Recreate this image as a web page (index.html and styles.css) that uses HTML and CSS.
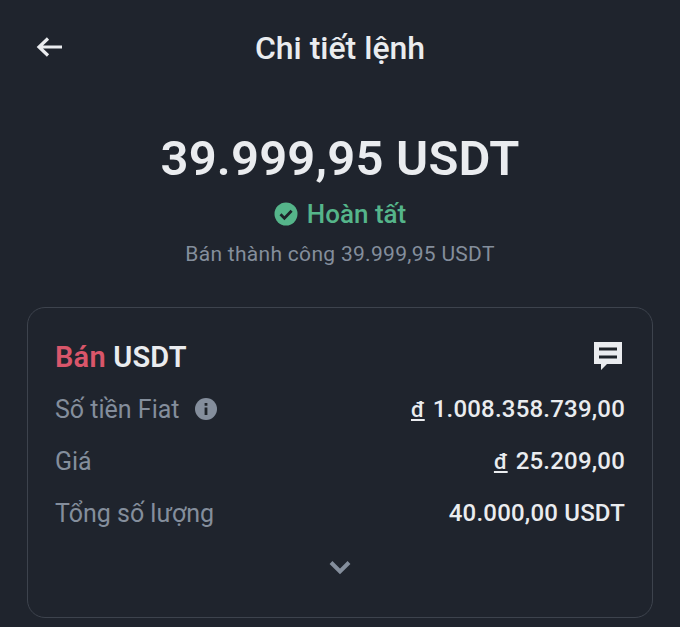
FILE: index.html
```html
<!DOCTYPE html>
<html>
<head>
<title>Chi tiết lệnh</title>
<meta charset="UTF-8">
<link rel="stylesheet" href="styles.css">
</head>
<body>
<div class="topbar">
  <svg class="back" width="28" height="24" viewBox="0 0 28 24"><path d="M27 12H4M13 3.5L4 12l9 8.5" fill="none" stroke="#eaecef" stroke-width="3.2"/></svg>
  <h1>Chi tiết lệnh</h1>
</div>
<div class="summary">
  <div class="amount">39.999,95 USDT</div>
  <div class="status">
    <svg width="24" height="24" viewBox="0 0 24 24"><circle cx="12" cy="12" r="11.5" fill="#55b58a"/><path d="M6.5 12.3l3.9 3.9 7.2-7.4" fill="none" stroke="#1e2329" stroke-width="2.8"/></svg>
    <span>Hoàn tất</span>
  </div>
  <div class="note">Bán thành công 39.999,95 USDT</div>
</div>
<div class="card">
  <div class="card-head">
    <div class="title"><span class="sell">Bán</span> USDT</div>
    <svg class="chat" width="28" height="30" viewBox="0 0 28 30"><path d="M0 1h28v22H13l-6 6v-6H0z" fill="#eaecef"/><path d="M5 8h18M5 16h18" stroke="#1e2329" stroke-width="3.2"/></svg>
  </div>
  <div class="row">
    <div class="label">Số tiền Fiat
      <svg width="22" height="22" viewBox="0 0 22 22"><circle cx="11" cy="11" r="11" fill="#848e9c"/><path d="M11 9.5v7.5M11 5v2.8" stroke="#1e2329" stroke-width="2.8"/></svg>
    </div>
    <div class="value"><span class="dong">đ</span>1.008.358.739,00</div>
  </div>
  <div class="row">
    <div class="label">Giá</div>
    <div class="value"><span class="dong">đ</span>25.209,00</div>
  </div>
  <div class="row">
    <div class="label">Tổng số lượng</div>
    <div class="value">40.000,00 USDT</div>
  </div>
  <div class="more">
    <svg width="24" height="16" viewBox="0 0 24 16"><path d="M3 3.5l9 9 9-9" fill="none" stroke="#848e9c" stroke-width="4"/></svg>
  </div>
</div>
</body>
</html>
```

FILE: styles.css
```css
body {
  margin: 0;
  height: 627px;
  overflow: hidden;
  background: #1f242d;
  color: #eaecef;
  font-family: "Roboto", "Liberation Sans", sans-serif;
}

.topbar {
  display: flex;
  align-items: center;
  justify-content: center;
  height: 96px;
  position: relative;
}

.back {
  position: absolute;
  left: 35px;
  top: 35px;
}

h1 {
  margin: 0;
  font-size: 32px;
  font-weight: 500;
}

.summary {
  display: flex;
  flex-direction: column;
  align-items: center;
  padding-top: 33px;
}

.amount {
  font-size: 49px;
  font-weight: 600;
  letter-spacing: 0.2px;
  line-height: 60px;
}

.status {
  display: flex;
  align-items: center;
  gap: 9px;
  margin-top: 10px;
  height: 30px;
  font-size: 26px;
  font-weight: 500;
  color: #55b58a;
}

.note {
  margin-top: 12px;
  font-size: 21px;
  line-height: 26px;
  letter-spacing: 0.3px;
  color: #848e9c;
}

.card {
  margin: 40px 27px 0;
  padding: 31px 27px 0;
  height: 311px;
  box-sizing: border-box;
  border: 1.5px solid #3d434d;
  border-radius: 18px;
}

.card-head {
  display: flex;
  justify-content: space-between;
  align-items: center;
  height: 36px;
}

.chat {
  margin-right: 3px;
  margin-bottom: 2px;
}

.title {
  font-size: 29px;
  font-weight: 600;
  letter-spacing: 0.2px;
}

.sell {
  color: #d9566a;
}

.row {
  display: flex;
  justify-content: space-between;
  align-items: center;
  height: 52px;
}

.row:nth-child(2) {
  margin-top: 8px;
}

.label {
  display: flex;
  align-items: center;
  gap: 15px;
  font-size: 25px;
  color: #848e9c;
}

.value {
  font-size: 24px;
  font-weight: 500;
  letter-spacing: 0.2px;
}

.dong {
  margin-right: 8px;
  font-size: 22px;
  text-decoration: underline;
}

.more {
  display: flex;
  justify-content: center;
  margin-top: 20px;
}
```
